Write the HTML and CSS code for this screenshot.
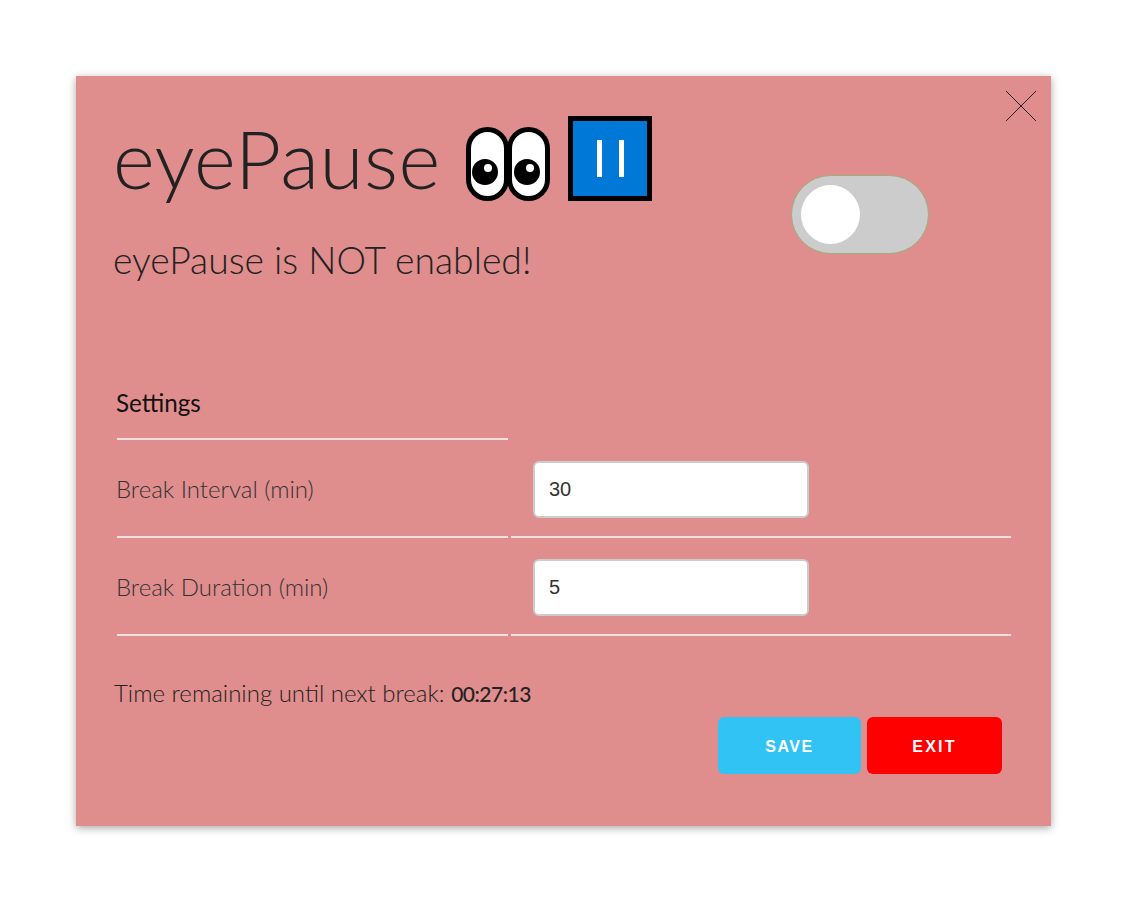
FILE: index.html
```html
<!DOCTYPE html><html lang="en">
<head>
<meta charset="UTF-8" />
<meta name="viewport" content="width=device-width, initial-scale=1" />
<title>eyePause</title>
<link rel="stylesheet" href="styles.css">
</head>
<body>
<div class="card">
  <button class="close" aria-label="Close">
    <svg width="32" height="32" viewBox="0 0 32 32"><path d="M1 1 L31 31 M31 1 L1 31" stroke="#222" stroke-width="1" fill="none"/></svg>
  </button>

  <div class="header">
    <div class="heading">
      <div class="title-row">
        <h1>eyePause</h1>
        <svg class="eyes" width="84" height="74" viewBox="0 0 84 74">
          <rect x="2.5" y="2.5" width="38" height="69" rx="19" fill="#fff" stroke="#000" stroke-width="5"/>
          <rect x="43.5" y="2.5" width="38" height="69" rx="19" fill="#fff" stroke="#000" stroke-width="5"/>
          <circle cx="19" cy="45" r="13" fill="#000"/>
          <circle cx="61" cy="45" r="13" fill="#000"/>
          <circle cx="22" cy="41" r="4" fill="#fff"/>
          <circle cx="64" cy="41" r="4" fill="#fff"/>
        </svg>
        <div class="pause-icon"><span></span><span></span></div>
      </div>
      <p class="status">eyePause is NOT enabled!</p>
    </div>
    <div class="toggle"><span class="knob"></span></div>
  </div>

  <div class="settings">
    <div class="cell heading-cell"><strong class="label">Settings</strong></div>
    <div class="cell-empty"></div>
    <div class="cell"><span class="label">Break Interval (min)</span></div>
    <div class="cell field"><input type="text" value="30"></div>
    <div class="cell"><span class="label">Break Duration (min)</span></div>
    <div class="cell field"><input type="text" value="5"></div>
  </div>

  <p class="remaining">Time remaining until next break: <strong>00:27:13</strong></p>

  <div class="actions">
    <button class="btn save">SAVE</button>
    <button class="btn exit">EXIT</button>
  </div>
</div>
</body>
</html>
```

FILE: styles.css
```css
body {
  margin: 0;
  padding: 76px 76px;
  background: #fff;
  color: #222;
  font-family: "Lato", "Open Sans", sans-serif;
}
.card {
  position: relative;
  box-sizing: border-box;
  width: 975px;
  height: 750px;
  background: #e08d8d;
  box-shadow: 0 2px 8px rgba(0,0,0,0.35);
  padding: 40px 40px 0 38px;
}
.close {
  position: absolute;
  top: 14px;
  right: 14px;
  padding: 0;
  border: none;
  background: none;
  line-height: 0;
}
.header {
  display: flex;
  align-items: flex-start;
}
.heading { width: 677px; }
.title-row {
  display: flex;
  align-items: flex-start;
  height: 85px;
}
h1 {
  margin: 0 0 0 -1px;
  font-size: 80px;
  font-weight: 300;
  line-height: 85px;
  letter-spacing: 0.5px;
  width: 353px;
}
.eyes { margin-top: 11px; }
.pause-icon {
  box-sizing: border-box;
  width: 84px;
  height: 85px;
  margin-left: 18px;
  border: 5px solid #000;
  background: #0078d7;
  display: flex;
  justify-content: center;
  align-items: center;
  gap: 17px;
}
.pause-icon span {
  width: 5px;
  height: 37px;
  background: #fff;
}
.status {
  margin: 36px 0 0 -1px;
  font-size: 37.3px;
  font-weight: 300;
  line-height: 46px;
}
.toggle {
  box-sizing: border-box;
  width: 138px;
  height: 79px;
  margin-top: 59px;
  padding: 9px;
  border: 1px solid #98b07c;
  border-radius: 40px;
  background: #ccc;
}
.knob {
  display: block;
  width: 59px;
  height: 59px;
  border-radius: 50%;
  background: #fff;
}
.settings {
  display: grid;
  grid-template-columns: 391px 500px;
  column-gap: 3px;
  margin: 87px 0 0 3px;
}
.cell {
  box-sizing: border-box;
  height: 98px;
  display: flex;
  align-items: center;
  border-bottom: 2px solid #f0e0e0;
  font-size: 24px;
  font-weight: 300;
  color: #333;
}
.label { margin-left: -1px; }
.heading-cell {
  height: 70px;
  padding-bottom: 4px;
  color: #111;
}
.heading-cell strong { font-weight: 400; font-size: 24.2px; }
.field { padding: 2px 0 0 22px; }
input {
  box-sizing: border-box;
  width: 276px;
  height: 57px;
  padding: 0 14px;
  border: 2px solid #ccc;
  border-radius: 6px;
  background: #fff;
  color: #333;
  font-family: "Liberation Sans", sans-serif;
  font-size: 20px;
}
.remaining {
  margin: 42px 0 0;
  font-size: 24px;
  font-weight: 300;
  line-height: 30px;
}
.remaining strong { font-weight: 500; font-size: 21px; letter-spacing: -0.5px; color: #222; }
.actions {
  display: flex;
  gap: 6px;
  margin: 8px 0 0 604px;
}
.btn {
  height: 57px;
  padding: 2px 0 0;
  border: none;
  border-radius: 6px;
  color: #fff;
  font-family: "Liberation Sans", sans-serif;
  font-size: 16px;
  font-weight: bold;
  letter-spacing: 1.5px;
}
.save { width: 143px; background: #31c3f3; }
.exit { width: 135px; background: #f00; letter-spacing: 2.2px; }
```
